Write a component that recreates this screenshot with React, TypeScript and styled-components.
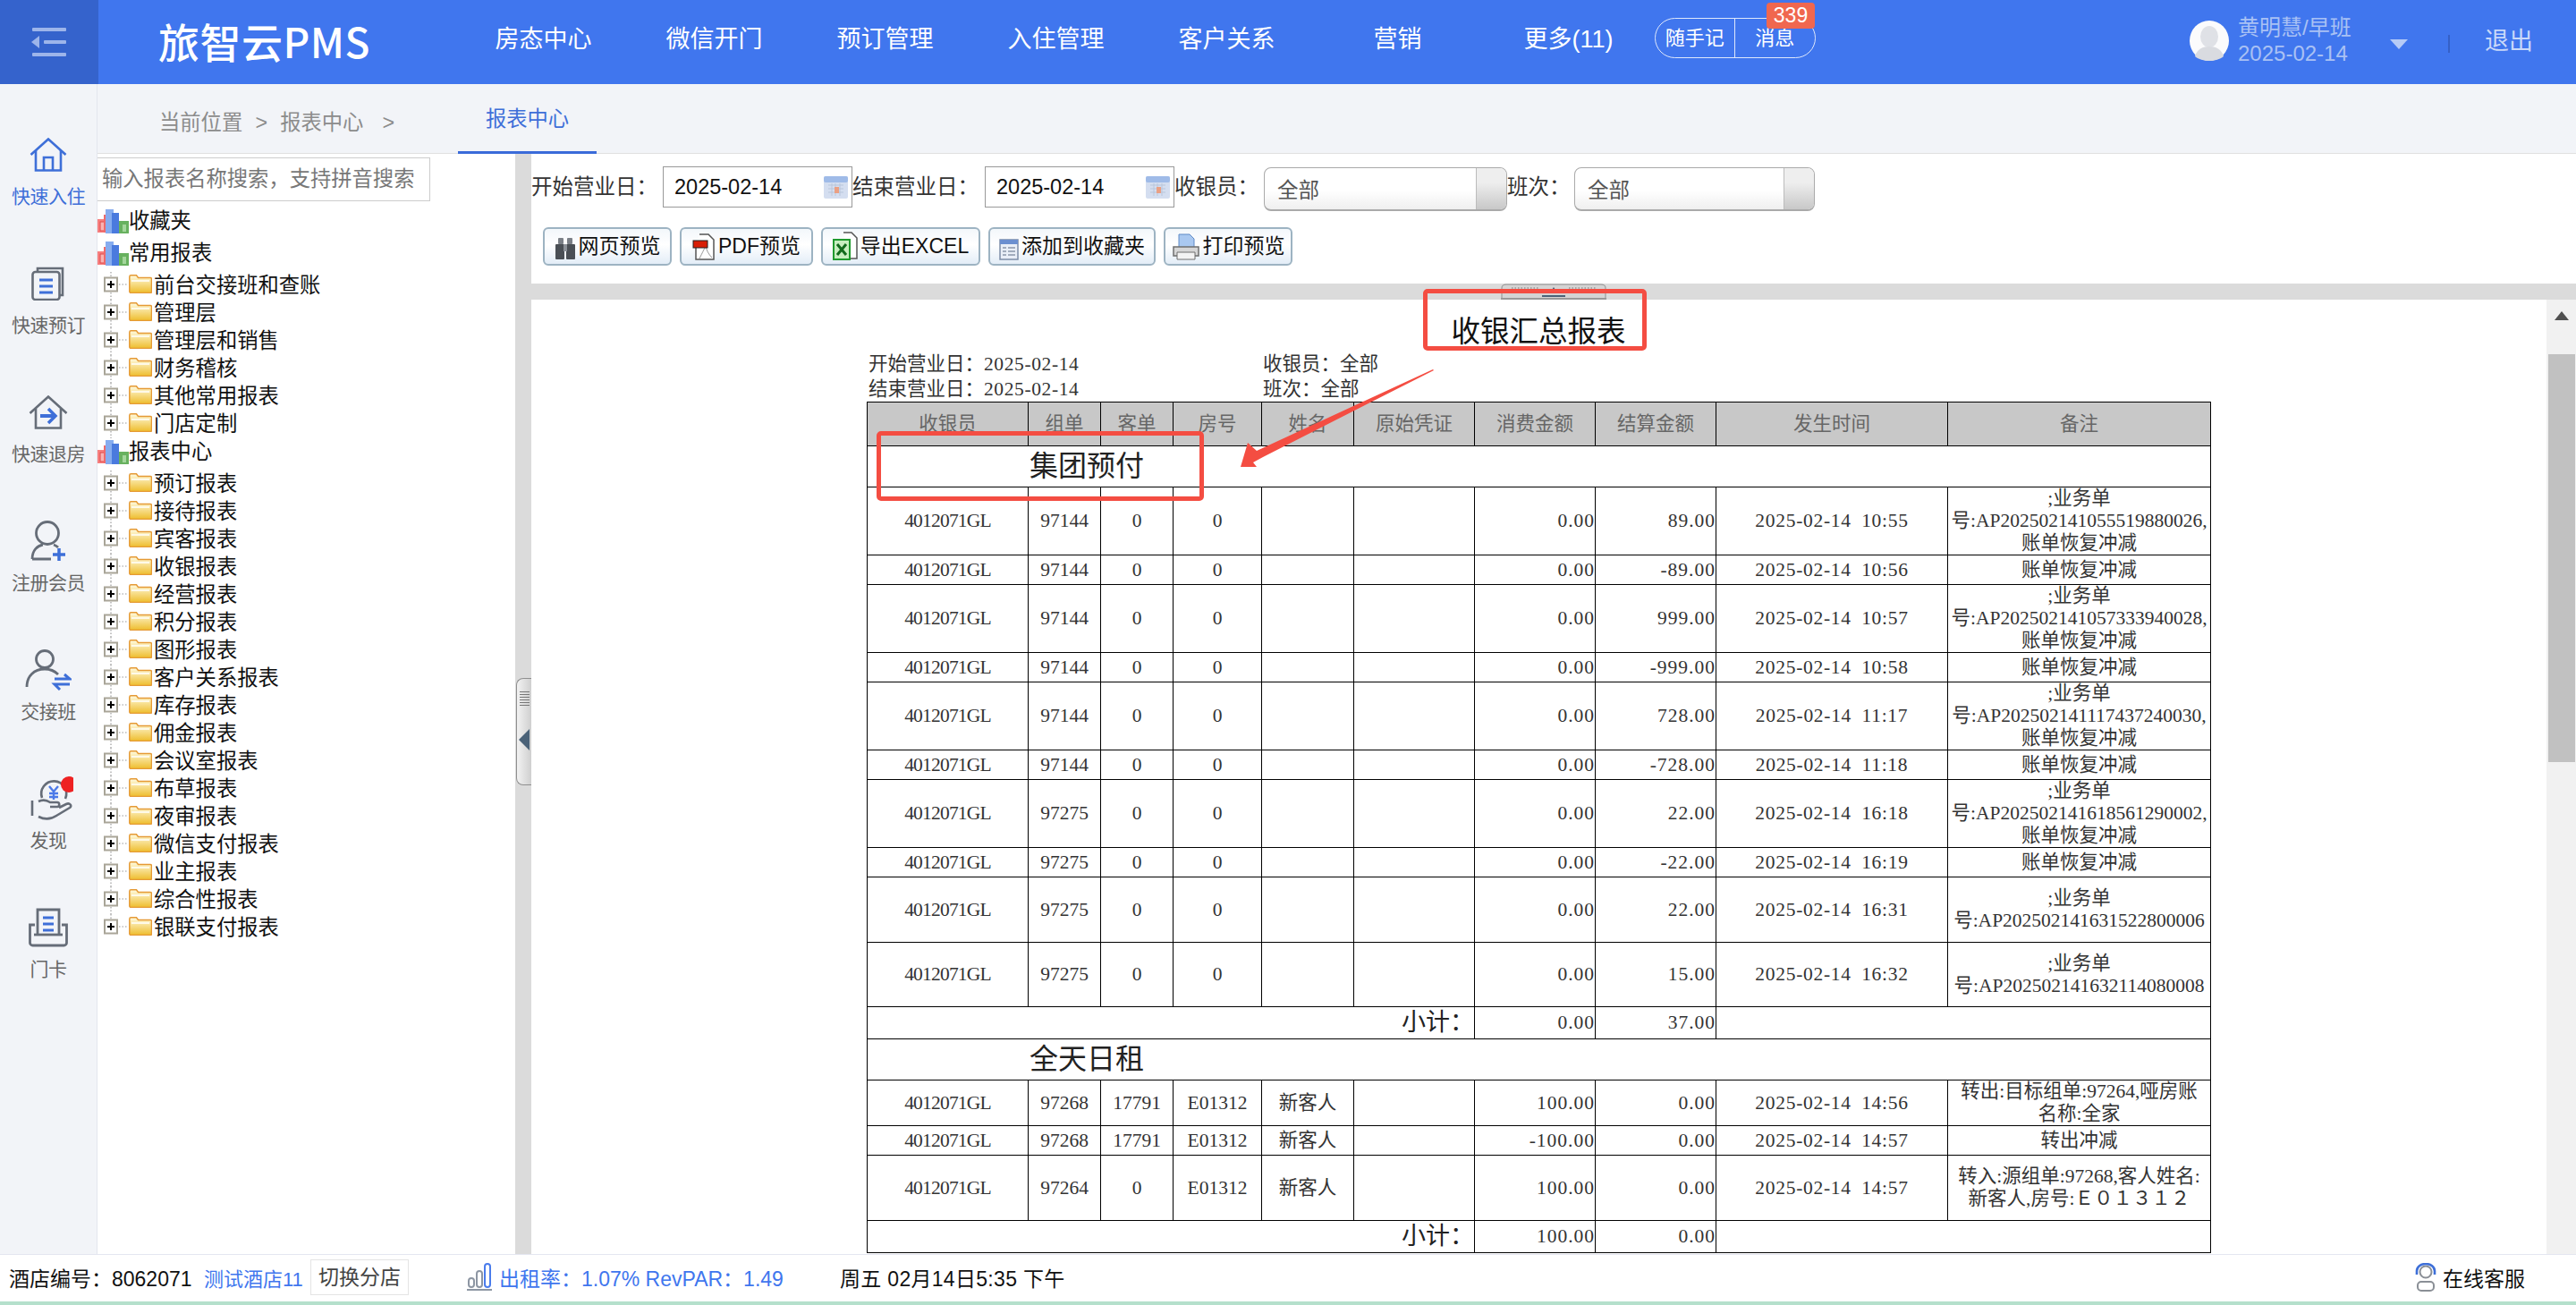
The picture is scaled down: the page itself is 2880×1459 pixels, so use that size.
import { FC } from "react";
import styled, { createGlobalStyle } from "styled-components";

type Row = {
  cols: string[];
  note: string[];
  h: number;
};

const navItems = ["房态中心", "微信开门", "预订管理", "入住管理", "客户关系", "营销", "更多(11)"];

const commonReports = ["前台交接班和查账", "管理层", "管理层和销售", "财务稽核", "其他常用报表", "门店定制"];
const reportCenter = [
  "预订报表", "接待报表", "宾客报表", "收银报表", "经营报表", "积分报表", "图形报表", "客户关系报表", "库存报表",
  "佣金报表", "会议室报表", "布草报表", "夜审报表", "微信支付报表", "业主报表", "综合性报表", "银联支付报表",
];

const headers = ["收银员", "组单", "客单", "房号", "姓名", "原始凭证", "消费金额", "结算金额", "发生时间", "备注"];
const widths = [180, 81, 81, 99, 103, 135, 135, 135, 259, 294];

const BILL = "账单恢复冲减";
const pay = (group: string, spend: string, settle: string, time: string, note: string[], h: number): Row => ({
  cols: ["4012071GL", group, "0", "0", "", "", spend, settle, `2025-02-14 ${time}`],
  note,
  h,
});
const stay = (group: string, guest: string, spend: string, time: string, note: string[], h: number): Row => ({
  cols: ["4012071GL", group, guest, "E01312", "新客人", "", spend, "0.00", `2025-02-14 ${time}`],
  note,
  h,
});

const prepaid: Row[] = [
  pay("97144", "0.00", "89.00", "10:55", [";业务单", "号:AP202502141055519880026,", BILL], 76),
  pay("97144", "0.00", "-89.00", "10:56", [BILL], 33),
  pay("97144", "0.00", "999.00", "10:57", [";业务单", "号:AP202502141057333940028,", BILL], 76),
  pay("97144", "0.00", "-999.00", "10:58", [BILL], 33),
  pay("97144", "0.00", "728.00", "11:17", [";业务单", "号:AP202502141117437240030,", BILL], 75),
  pay("97144", "0.00", "-728.00", "11:18", [BILL], 33),
  pay("97275", "0.00", "22.00", "16:18", [";业务单", "号:AP202502141618561290002,", BILL], 75),
  pay("97275", "0.00", "-22.00", "16:19", [BILL], 33),
  pay("97275", "0.00", "22.00", "16:31", [";业务单", "号:AP202502141631522800006"], 73),
  pay("97275", "0.00", "15.00", "16:32", [";业务单", "号:AP202502141632114080008"], 72),
];

const fullDay: Row[] = [
  stay("97268", "17791", "100.00", "14:56", ["转出:目标组单:97264,哑房账", "名称:全家"], 50),
  stay("97268", "17791", "-100.00", "14:57", ["转出冲减"], 33),
  stay("97264", "0", "100.00", "14:57", ["转入:源组单:97268,客人姓名:", "新客人,房号:Ｅ０１３１２"], 73),
];

const MenuIcon: FC = () => (
  <svg width="40" height="32" viewBox="0 0 40 32" fill="#9db5ea">
    <rect x="1" y="0" width="38" height="4" rx="1" />
    <rect x="14" y="14" width="25" height="4" rx="1" />
    <rect x="1" y="28" width="38" height="4" rx="1" />
    <path d="M0 16 9 9v14z" />
  </svg>
);

const Avatar: FC = () => (
  <svg width="44" height="45" viewBox="0 0 44 45">
    <ellipse cx="22" cy="22.5" rx="22" ry="22.5" fill="#fbfbfc" />
    <ellipse cx="22" cy="18" rx="10" ry="12" fill="#dfe1e6" />
    <path d="M6 40c2-8 9-11 16-11s14 3 16 11c-4 3.500-10 5-16 5S10 43.500 6 40z" fill="#d9dbe0" />
  </svg>
);

const HomeIcon: FC = () => (
  <svg width="42" height="38" viewBox="0 0 42 38" fill="none" stroke="#3e6fd8" strokeWidth="2.600">
    <path d="M1.500 19 21 1.500 40.500 19" />
    <path d="M7 14v22.500h28V14" />
    <path d="M16 36.500V22h10v14.500" />
  </svg>
);

const DocsIcon: FC = () => (
  <svg width="38" height="38" viewBox="0 0 38 38" fill="none" stroke="#666d78" strokeWidth="2.600">
    <path d="M7 5V2h28v30h-3" />
    <rect x="1.500" y="6" width="30" height="31" rx="3" />
    <path d="M9 15h15M9 22h15M9 29h15" stroke="#3e6fd8" strokeWidth="3" />
  </svg>
);

const CheckoutIcon: FC = () => (
  <svg width="44" height="38" viewBox="0 0 44 38" fill="none" stroke="#666d78" strokeWidth="2.600">
    <path d="M1.500 20 22 1.500 42.500 20" />
    <path d="M8 15v21.500h28V15" />
    <path d="M13 23h15" stroke="#3e6fd8" strokeWidth="4" />
    <path d="m22 15 8 8-8 8" stroke="#3e6fd8" strokeWidth="3.500" />
  </svg>
);

const MemberIcon: FC = () => (
  <svg width="40" height="46" viewBox="0 0 40 46" fill="none" stroke="#666d78" strokeWidth="2.800">
    <circle cx="19" cy="14" r="12.500" />
    <path d="M2 43c0-10 6-15 12-16M26 27c2 .7 4 2 5 3M2 43h21" />
    <path d="M32 31v14M25 38h14" stroke="#3e6fd8" strokeWidth="3.500" />
  </svg>
);

const ShiftIcon: FC = () => (
  <svg width="52" height="46" viewBox="0 0 52 46" fill="none" stroke="#666d78" strokeWidth="2.800">
    <circle cx="22" cy="11" r="9.500" />
    <path d="M2 42c0-12 8-20 20-20 6 0 11 2 15 6" />
    <path d="M33 33h17l-6-5M50 39H33l6 6" stroke="#3e6fd8" strokeWidth="3" />
  </svg>
);

const DiscoverIcon: FC = () => (
  <svg width="56" height="50" viewBox="0 0 56 50" fill="none" stroke="#666d78" strokeWidth="2.600">
    <g transform="translate(8 0)">
      <path d="M13 24a14 14 0 1 1 26 1" />
      <path d="M2 27v17M9 28c6-3 10-1 13 1h8c3 0 3 5 0 5h-8M9 45c8 4 14 3 20-1l15-9c3-2 0-6-4-4l-8 4" />
      <path d="m21 11 5 6 5-6M26 17v9M21 19h10M21 23h10" stroke="#4b79e8" strokeWidth="2.400" />
    </g>
    <circle cx="51" cy="9" r="9" fill="#ee2223" stroke="none" />
  </svg>
);

const CardIcon: FC = () => (
  <svg width="44" height="44" viewBox="0 0 44 44" fill="none" stroke="#666d78" strokeWidth="2.800">
    <path d="M10 30V2h24v28" />
    <path d="M7 19H1.500v20a3 3 0 0 0 3 3h35a3 3 0 0 0 3-3V19H37" />
    <path d="M6 30h32" />
    <path d="M16 11h12M16 18h12M16 25h12" stroke="#3e6fd8" strokeWidth="3" />
  </svg>
);

const BarsIcon: FC = () => (
  <svg width="35" height="29" viewBox="0 0 35 29">
    <rect x="0" y="12" width="10" height="15" fill="#f77f7f" />
    <rect x="3" y="15" width="5" height="10" fill="#f9b3b3" stroke="#e04848" />
    <rect x="7" y="7" width="7" height="20" fill="#ee6a6a" />
    <rect x="9" y="1" width="9" height="27" fill="#86acef" />
    <rect x="16" y="5" width="8" height="23" fill="#4a7ade" />
    <rect x="24" y="14" width="11" height="14" fill="#68b15f" />
    <rect x="28" y="18" width="4" height="8" fill="#a4d69c" />
  </svg>
);

const Connector: FC<{ last?: boolean }> = ({ last }) => (
  <svg width="28" height="31" viewBox="0 0 28 31">
    <path d={last ? "M8 0v5" : "M8 0v5M8 23v8"} stroke="#888" strokeDasharray="1.500 2" fill="none" />
    <path d="M17 14h10" stroke="#999" strokeDasharray="1.500 2" fill="none" />
    <rect x="1" y="6.500" width="14" height="15" fill="#fff" stroke="#a9a598" strokeWidth="2" />
    <path d="M4 14h8M8 10v8" stroke="#000" strokeWidth="2" />
  </svg>
);

const FolderIcon: FC = () => (
  <svg width="26" height="21" viewBox="0 0 26 21">
    <defs>
      <linearGradient id="folderFill" x1="0" y1="0" x2="0" y2="1">
        <stop offset="0" stopColor="#fffbe0" />
        <stop offset="1" stopColor="#eebd2c" />
      </linearGradient>
    </defs>
    <path d="M.800 2.500C.800 1.500 1.500 .800 2.500 .800h6l2 2.700h13.500c1 0 1.500 .7 1.500 1.500V19c0 .8-.5 1.500-1.500 1.500H2.500c-1 0-1.700-.7-1.700-1.500z" fill="url(#folderFill)" stroke="#e59a35" strokeWidth="1.500" />
    <path d="M3 7h20" stroke="#fff" strokeWidth="1.500" />
  </svg>
);

const CalendarIcon: FC = () => (
  <svg width="27" height="25" viewBox="0 0 27 25">
    <rect width="27" height="25" rx="2" fill="#d4def0" />
    <rect width="27" height="7" rx="2" fill="#9fbbe8" />
    <path d="M5 10h17M5 14h17M5 18h17M9 8v14M13 8v14M18 8v14" stroke="#b9c6db" />
    <rect x="12" y="12" width="5" height="7" fill="#eaa084" />
  </svg>
);

const BinocularIcon: FC = () => (
  <svg width="24" height="26" viewBox="0 0 24 26" fill="#4a4f55">
    <rect x="4" y="1" width="6" height="7" rx="1" fill="#7b8087" />
    <rect x="14" y="1" width="6" height="7" rx="1" fill="#7b8087" />
    <rect x="1" y="8" width="10" height="17" rx="1" />
    <rect x="13" y="8" width="10" height="17" rx="1" />
    <rect x="10" y="8" width="4" height="8" fill="#8b9097" />
  </svg>
);

const PdfIcon: FC = () => (
  <svg width="26" height="30" viewBox="0 0 26 30" fill="none">
    <path d="M8 1h10l6 6v22H4V12" fill="#fff" stroke="#555" strokeWidth="1.500" />
    <path d="M8 28c3-6 5-10 7-14 1 5 3 9 7 13" stroke="#999" />
    <rect x="1" y="8" width="16" height="8" fill="#d81e06" stroke="#222" />
  </svg>
);

const ExcelIcon: FC = () => (
  <svg width="28" height="32" viewBox="0 0 28 32" fill="none">
    <path d="M12 1h9l6 6v23H17" fill="#fff" stroke="#555" strokeWidth="1.500" />
    <rect x="1" y="9" width="18" height="22" fill="#c7eec0" stroke="#1f9a2e" strokeWidth="2" />
    <path d="m5 14 10 12M15 14 5 26" stroke="#126b1d" strokeWidth="3" />
  </svg>
);

const ListIcon: FC = () => (
  <svg width="22" height="24" viewBox="0 0 22 24">
    <rect x="1" y="1" width="20" height="22" fill="#e9eef7" stroke="#7d8da8" strokeWidth="1.500" />
    <rect x="1" y="1" width="20" height="5" fill="#6b8fd0" />
    <path d="M4 10h4M10 10h8M4 14h4M10 14h8M4 18h4M10 18h8" stroke="#8a97ab" strokeWidth="1.500" />
  </svg>
);

const PrintIcon: FC = () => (
  <svg width="32" height="30" viewBox="0 0 32 30">
    <path d="M8 1h12l5 5v11H8z" fill="#a9c8f0" stroke="#5f8ac6" />
    <path d="M2 15h28v10H2z" fill="#d6d6d6" stroke="#6f6f6f" strokeWidth="1.500" />
    <path d="M6 21h20v8H6z" fill="#f3f3f3" stroke="#6f6f6f" />
  </svg>
);

const SplitArrow: FC = () => (
  <svg width="12" height="24" viewBox="0 0 12 24">
    <path d="M12 0v24L0 12z" fill="#4a6278" />
  </svg>
);

const GripTop: FC = () => (
  <svg width="118" height="18" viewBox="0 0 118 18" fill="none">
    <path d="M1 18V5q0-4 5-4h106q5 0 5 4v13z" fill="#d4d4d4" stroke="#8f8f8f" />
    <path d="M12 5h30M12 8h30M76 5h30M76 8h30" stroke="#777" strokeDasharray="1.500 2" />
    <path d="m59 4 4 6h-8z" fill="#4a6278" />
    <path d="M46 14h26" stroke="#4a6278" strokeWidth="2" />
    <path d="M0 17h118" stroke="#999" strokeWidth="2" />
  </svg>
);

const GuideArrow: FC = () => (
  <svg width="216" height="112" viewBox="0 0 216 112">
    <path d="M216 1 215 0 18 91 8 82 0 109 18 109 14 104 25 98z" fill="#f44d42" />
  </svg>
);

const StatsIcon: FC = () => (
  <svg width="28" height="31" viewBox="0 0 28 31" fill="none" stroke="#8d96a3" strokeWidth="2">
    <rect x="2" y="17" width="6" height="10" rx="3" />
    <rect x="11" y="9" width="6" height="18" rx="3" />
    <rect x="20" y="1" width="6" height="26" rx="3" stroke="#4a7cec" />
    <path d="M0 30h28" />
  </svg>
);

const ServiceIcon: FC = () => (
  <svg width="26" height="32" viewBox="0 0 26 32" fill="none" stroke="#8a8f96" strokeWidth="2">
    <circle cx="13" cy="10" r="6.500" />
    <path d="M3 13V9a10 8 0 0 1 20 0v4" stroke="#3e6fd8" strokeWidth="2.600" />
    <rect x="4" y="21" width="18" height="10" rx="4" />
  </svg>
);

const spacingFor = (i: number): string => {
  if (i === 0) return "-0.800px";
  if (i === 6 || i === 7) return "1px";
  if (i === 8) return "0.700px";
  return "0";
};

const ReportRow: FC<{ row: Row }> = ({ row }) => (
  <StTr $h={row.h}>
    {row.cols.map((c, i) => (
      <StTd key={i} $align={i === 6 || i === 7 ? "right" : "center"} $spaced={i === 8} $track={spacingFor(i)}>
        {c}
      </StTd>
    ))}
    <StTd $align="center">
      {row.note.map((n) => (
        <StNoteLine key={n}>{n}</StNoteLine>
      ))}
    </StTd>
  </StTr>
);

const Subtotal: FC<{ spend: string; settle: string }> = ({ spend, settle }) => (
  <StTr $h={36}>
    <StSubLabel colSpan={6}>小计：</StSubLabel>
    <StTd $align="right" $track="1px">
      {spend}
    </StTd>
    <StTd $align="right" $track="1px">
      {settle}
    </StTd>
    <StTd colSpan={2} $align="center" />
  </StTr>
);

const App: FC = () => {
  return (
    <StRoot>
      <GlobalStyle />
      <StHeader>
        <StMenuBox>
          <MenuIcon />
        </StMenuBox>
        <StLogo>旅智云PMS</StLogo>
        <StNav>
          {navItems.map((n) => (
            <StNavItem key={n}>{n}</StNavItem>
          ))}
        </StNav>
        <StPill>
          <StPillPart $w={89}>随手记</StPillPart>
          <StPillPart $w={91} $line>
            消息
          </StPillPart>
          <StBadge>339</StBadge>
        </StPill>
        <StUser>
          <Avatar />
          <StUserText>
            <span>黄明慧/早班</span>
            <span>2025-02-14</span>
          </StUserText>
          <StCaret />
          <StUserDivider />
          <StLogout>退出</StLogout>
        </StUser>
      </StHeader>

      <StBody>
        <StSide>
          <StSideItem $active>
            <StSideIcon>
              <HomeIcon />
            </StSideIcon>
            快速入住
          </StSideItem>
          <StSideItem>
            <StSideIcon>
              <DocsIcon />
            </StSideIcon>
            快速预订
          </StSideItem>
          <StSideItem>
            <StSideIcon>
              <CheckoutIcon />
            </StSideIcon>
            快速退房
          </StSideItem>
          <StSideItem>
            <StSideIcon>
              <MemberIcon />
            </StSideIcon>
            注册会员
          </StSideItem>
          <StSideItem>
            <StSideIcon>
              <ShiftIcon />
            </StSideIcon>
            交接班
          </StSideItem>
          <StSideItem>
            <StSideIcon>
              <DiscoverIcon />
            </StSideIcon>
            发现
          </StSideItem>
          <StSideItem>
            <StSideIcon>
              <CardIcon />
            </StSideIcon>
            门卡
          </StSideItem>
        </StSide>

        <StContent>
          <StCrumbBar>
            <StCrumbs>
              当前位置<StCrumbSep $w={42}>&gt;</StCrumbSep>报表中心<StCrumbSep $w={56}>&gt;</StCrumbSep>
            </StCrumbs>
            <StTab>报表中心</StTab>
          </StCrumbBar>

          <StPanels>
            <StTree>
              <StSearch>输入报表名称搜索，支持拼音搜索</StSearch>
              <StRootNode>
                <BarsIcon />
                收藏夹
              </StRootNode>
              <StRootNode>
                <BarsIcon />
                常用报表
              </StRootNode>
              {commonReports.map((t) => (
                <StTreeRow key={t}>
                  <Connector />
                  <StFolder>
                    <FolderIcon />
                  </StFolder>
                  {t}
                </StTreeRow>
              ))}
              <StRootNode>
                <BarsIcon />
                报表中心
              </StRootNode>
              {reportCenter.map((t, i) => (
                <StTreeRow key={t}>
                  <Connector last={i === reportCenter.length - 1} />
                  <StFolder>
                    <FolderIcon />
                  </StFolder>
                  {t}
                </StTreeRow>
              ))}
            </StTree>

            <StSplitter>
              <StSplitHandle>
                <StGrip />
                <SplitArrow />
              </StSplitHandle>
            </StSplitter>

            <StMain>
              <StToolbar>
                <StFilterRow>
                  <StLabel $w={147}>开始营业日：</StLabel>
                  <StDateBox>
                    2025-02-14
                    <CalendarIcon />
                  </StDateBox>
                  <StLabel $w={148}>结束营业日：</StLabel>
                  <StDateBox>
                    2025-02-14
                    <CalendarIcon />
                  </StDateBox>
                  <StLabel $w={100}>收银员：</StLabel>
                  <StSelect $w={272}>
                    全部
                    <StSelectArrow />
                  </StSelect>
                  <StLabel $w={75}>班次：</StLabel>
                  <StSelect $w={269}>
                    全部
                    <StSelectArrow />
                  </StSelect>
                </StFilterRow>
                <StButtonRow>
                  <StButton $w={144}>
                    <BinocularIcon />
                    网页预览
                  </StButton>
                  <StButton $w={149}>
                    <PdfIcon />
                    PDF预览
                  </StButton>
                  <StButton $w={178}>
                    <ExcelIcon />
                    导出EXCEL
                  </StButton>
                  <StButton $w={187}>
                    <ListIcon />
                    添加到收藏夹
                  </StButton>
                  <StButton $w={144}>
                    <PrintIcon />
                    打印预览
                  </StButton>
                </StButtonRow>
              </StToolbar>

              <StGreyBar>
                <GripTop />
              </StGreyBar>

              <StReport>
                <StSheet>
                  <StReportTitle>收银汇总报表</StReportTitle>
                  <StMeta>
                    <span>
                      开始营业日：<StMetaDate>2025-02-14</StMetaDate>
                    </span>
                    <span>收银员：全部</span>
                    <span>
                      结束营业日：<StMetaDate>2025-02-14</StMetaDate>
                    </span>
                    <span>班次：全部</span>
                  </StMeta>
                  <StTable>
                    <colgroup>
                      {widths.map((w, i) => (
                        <StCol key={i} $w={w} />
                      ))}
                    </colgroup>
                    <tbody>
                      <StHeadRow>
                        {headers.map((h) => (
                          <StTh key={h}>{h}</StTh>
                        ))}
                      </StHeadRow>
                      <StTr $h={46}>
                        <StGroupCell colSpan={10}>集团预付</StGroupCell>
                      </StTr>
                      {prepaid.map((r, i) => (
                        <ReportRow key={i} row={r} />
                      ))}
                      <Subtotal spend="0.00" settle="37.00" />
                      <StTr $h={46}>
                        <StGroupCell colSpan={10}>全天日租</StGroupCell>
                      </StTr>
                      {fullDay.map((r, i) => (
                        <ReportRow key={i} row={r} />
                      ))}
                      <Subtotal spend="100.00" settle="0.00" />
                    </tbody>
                  </StTable>
                </StSheet>
                <StScrollbar>
                  <StScrollUp />
                  <StScrollThumb />
                </StScrollbar>
              </StReport>

              <StNoteBoxTitle />
              <StNoteBoxGroup />
              <StGuide>
                <GuideArrow />
              </StGuide>
            </StMain>
          </StPanels>
        </StContent>
      </StBody>

      <StFooter>
        <StHotelCode>酒店编号：8062071</StHotelCode>
        <StHotelName>测试酒店11</StHotelName>
        <StSwitch>切换分店</StSwitch>
        <StStats>
          <StatsIcon />
          出租率：1.07% RevPAR：1.49
        </StStats>
        <StClock>周五 02月14日5:35 下午</StClock>
        <StService>
          <ServiceIcon />
          在线客服
        </StService>
      </StFooter>
    </StRoot>
  );
};

export default App;

const SANS = `"Liberation Sans", "Noto Sans CJK SC", sans-serif`;
const SERIF = `"Liberation Serif", "Noto Sans CJK SC", serif`;

const GlobalStyle = createGlobalStyle`
  html, body {
    margin: 0;
    padding: 0;
    background: #fff;
  }
  body {
    font-family: ${SANS};
  }
`;

const StRoot = styled.div`
  width: 2880px;
  height: 1459px;
  display: flex;
  flex-direction: column;
  overflow: hidden;
  background: #fff;
  color: #222;
`;

const StHeader = styled.header`
  height: 94px;
  flex: none;
  display: flex;
  background: #4076ee;
  color: #fff;
`;

const StMenuBox = styled.div`
  width: 110px;
  display: flex;
  align-items: center;
  justify-content: center;
  background: #3563cc;
`;

const StLogo = styled.div`
  width: 402px;
  padding-left: 67px;
  box-sizing: border-box;
  font-family: "Noto Sans CJK SC", sans-serif;
  font-size: 46px;
  line-height: 90px;
  font-weight: 500;
  letter-spacing: 0.500px;
  white-space: nowrap;
`;

const StNav = styled.nav`
  display: flex;
`;

const StNavItem = styled.div`
  width: 191px;
  text-align: center;
  font-size: 27px;
  line-height: 88px;
  white-space: nowrap;
`;

const StPill = styled.div`
  position: relative;
  width: 180px;
  height: 45px;
  margin: 20px 0 0 1px;
  display: flex;
  box-sizing: border-box;
  border: 1px solid #dfe8fb;
  border-radius: 23px;
`;

const StPillPart = styled.div<{ $w: number; $line?: boolean }>`
  width: ${(p) => p.$w}px;
  text-align: center;
  font-size: 22px;
  line-height: 43px;
  white-space: nowrap;
  border-left: ${(p) => (p.$line ? "1px solid #dfe8fb" : "none")};
`;

const StBadge = styled.div`
  position: absolute;
  right: 0;
  top: -18px;
  width: 54px;
  height: 29px;
  background: #f0674f;
  border-radius: 4px;
  text-align: center;
  font-size: 23px;
  line-height: 29px;
`;

const StUser = styled.div`
  margin-left: 418px;
  display: flex;
  align-items: center;
  height: 90px;
`;

const StUserText = styled.div`
  width: 170px;
  margin-left: 10px;
  display: flex;
  flex-direction: column;
  color: #a9c1f4;
  font-size: 24px;
  line-height: 29px;
`;

const StCaret = styled.div`
  width: 0;
  height: 0;
  border-left: 10px solid transparent;
  border-right: 10px solid transparent;
  border-top: 11px solid #b6cbf6;
  margin-top: 8px;
`;

const StUserDivider = styled.div`
  width: 2px;
  height: 20px;
  margin: 8px 39px 0 45px;
  background: #3560c6;
`;

const StLogout = styled.div`
  font-size: 27px;
  color: #c9d8f9;
  margin-top: -4px;
`;

const StBody = styled.div`
  flex: 1;
  min-height: 0;
  display: flex;
`;

const StSide = styled.aside`
  width: 108px;
  flex: none;
  padding-top: 55px;
  box-sizing: content-box;
  background: #f2f4f8;
  border-right: 1px solid #e3e6ee;
`;

const StSideItem = styled.div<{ $active?: boolean }>`
  height: 144px;
  display: flex;
  flex-direction: column;
  align-items: center;
  font-size: 21px;
  line-height: 28px;
  letter-spacing: -0.500px;
  color: ${(p) => (p.$active ? "#3e6fd8" : "#666")};
`;

const StSideIcon = styled.div`
  height: 48px;
  margin-bottom: 9px;
  display: flex;
  align-items: center;
  justify-content: center;
`;

const StContent = styled.div`
  flex: 1;
  min-width: 0;
  display: flex;
  flex-direction: column;
`;

const StCrumbBar = styled.div`
  height: 78px;
  flex: none;
  box-sizing: border-box;
  display: flex;
  background: #f2f4f8;
  border-bottom: 1px solid #e0e0e0;
`;

const StCrumbs = styled.div`
  width: 403px;
  padding-left: 69px;
  box-sizing: border-box;
  font-size: 23.300px;
  line-height: 86px;
  color: #8c8c8c;
  white-space: nowrap;
`;

const StCrumbSep = styled.span<{ $w: number }>`
  display: inline-block;
  width: ${(p) => p.$w}px;
  text-align: center;
  color: #8c8c8c;
`;

const StTab = styled.div`
  width: 155px;
  height: 78px;
  box-sizing: border-box;
  border-bottom: 3px solid #3a6bd9;
  text-align: center;
  font-size: 23.300px;
  line-height: 78px;
  color: #3e6fd8;
`;

const StPanels = styled.div`
  flex: 1;
  min-height: 0;
  display: flex;
`;

const StTree = styled.div`
  width: 467px;
  flex: none;
  font-size: 23.300px;
  color: #111;
  background: #fff;
`;

const StSearch = styled.div`
  width: 372px;
  height: 49px;
  margin: 4px 0 7px;
  padding-left: 5px;
  box-sizing: border-box;
  border: 1px solid #ccc;
  border-left: none;
  color: #777;
  line-height: 47px;
  white-space: nowrap;
`;

const StRootNode = styled.div`
  height: 31px;
  padding-bottom: 5px;
  display: flex;
  align-items: center;
  white-space: nowrap;
  line-height: 31px;

  svg {
    flex: none;
  }
`;

const StTreeRow = styled.div`
  height: 31px;
  padding-left: 7px;
  display: flex;
  align-items: center;
  white-space: nowrap;
  line-height: 31px;
`;

const StFolder = styled.div`
  width: 28px;
  height: 21px;
  margin-top: -9px;
`;

const StSplitter = styled.div`
  width: 18px;
  flex: none;
  padding-top: 586px;
  box-sizing: border-box;
  background: #dbdbdb;
`;

const StSplitHandle = styled.div`
  width: 17px;
  height: 120px;
  margin-left: 1px;
  box-sizing: border-box;
  display: flex;
  flex-direction: column;
  align-items: center;
  gap: 24px;
  padding-top: 14px;
  background: linear-gradient(90deg, #f2f2f2, #cfcfcf);
  border: 1px solid #8f8f8f;
  border-right: none;
  border-radius: 8px 0 0 8px;
`;

const StGrip = styled.div`
  width: 11px;
  height: 18px;
  background: repeating-linear-gradient(180deg, #777 0 1px, transparent 1px 3px);
`;

const StMain = styled.div`
  position: relative;
  flex: 1;
  min-width: 0;
  display: flex;
  flex-direction: column;
`;

const StToolbar = styled.div`
  height: 145px;
  flex: none;
  box-sizing: border-box;
  padding-top: 14px;
  font-size: 23.500px;
`;

const StFilterRow = styled.div`
  display: flex;
  align-items: flex-start;
  height: 68px;
`;

const StLabel = styled.div<{ $w: number }>`
  width: ${(p) => p.$w}px;
  flex: none;
  line-height: 46px;
  color: #333;
  white-space: nowrap;
`;

const StDateBox = styled.div`
  width: 212px;
  height: 46px;
  flex: none;
  box-sizing: border-box;
  padding: 0 4px 0 12px;
  display: flex;
  align-items: center;
  justify-content: space-between;
  border: 1px solid #999;
  color: #111;
  background: #fff;
`;

const StSelect = styled.div<{ $w: number }>`
  width: ${(p) => p.$w}px;
  height: 49px;
  flex: none;
  box-sizing: border-box;
  margin-top: 1px;
  padding-left: 14px;
  display: flex;
  justify-content: space-between;
  overflow: hidden;
  border: 1px solid #aaa;
  border-bottom-width: 2px;
  border-radius: 8px;
  line-height: 50px;
  color: #555;
  background: linear-gradient(180deg, #fff 55%, #efefef);
`;

const StSelectArrow = styled.div`
  width: 33px;
  flex: none;
  border-left: 1px solid #bcbcbc;
  background: linear-gradient(180deg, #eee 35%, #c8c8c8);
`;

const StButtonRow = styled.div`
  display: flex;
  gap: 9px;
  padding-left: 13px;
`;

const StButton = styled.div<{ $w: number }>`
  width: ${(p) => p.$w}px;
  height: 43px;
  flex: none;
  box-sizing: border-box;
  display: flex;
  align-items: flex-end;
  justify-content: center;
  gap: 3px;
  padding-bottom: 4px;
  overflow: hidden;
  border: 2px solid #9db3c2;
  border-radius: 6px;
  background: linear-gradient(180deg, #f3f7fb, #fff 45%, #e3edf7);
  color: #111;
  font-size: 23px;
  line-height: 32px;
  white-space: nowrap;

  svg {
    flex: none;
  }
`;

const StGreyBar = styled.div`
  height: 18px;
  flex: none;
  display: flex;
  justify-content: center;
  background: #dbdbdb;
`;

const StReport = styled.div`
  flex: 1;
  min-height: 0;
  display: flex;
`;

const StSheet = styled.div`
  flex: 1;
  min-width: 0;
  overflow: hidden;
  padding-left: 375px;
  box-sizing: border-box;
  font-family: ${SERIF};
  font-size: 21.500px;
  color: #333;
`;

const StReportTitle = styled.div`
  width: 1502px;
  padding-top: 16px;
  text-align: center;
  font-size: 32.500px;
  line-height: 40px;
  color: #111;
  margin-bottom: 3px;
`;

const StMeta = styled.div`
  display: grid;
  grid-template-columns: 441px 1fr;
  width: 1502px;
  padding-left: 2px;
  box-sizing: border-box;
  line-height: 27.500px;
`;

const StMetaDate = styled.span`
  letter-spacing: 0.600px;
`;

const StTable = styled.table`
  width: 1502px;
  table-layout: fixed;
  border-collapse: collapse;
  border: 1px solid #000;
  line-height: 25px;
`;

const StCol = styled.col<{ $w: number }>`
  width: ${(p) => p.$w}px;
`;

const StHeadRow = styled.tr`
  height: 49px;
  background: #c8c8c8;
`;

const StTh = styled.th`
  padding: 0;
  border: 1px solid #000;
  font-weight: normal;
  color: #666;
`;

const StTr = styled.tr<{ $h: number }>`
  height: ${(p) => p.$h}px;
`;

const StTd = styled.td<{ $align: string; $spaced?: boolean; $track?: string }>`
  padding: 0;
  border: 1px solid #000;
  text-align: ${(p) => p.$align};
  white-space: nowrap;
  letter-spacing: ${(p) => p.$track ?? "0"};
  word-spacing: ${(p) => (p.$spaced ? "5.400px" : "normal")};
`;

const StNoteLine = styled.div`
  white-space: nowrap;
`;

const StSubLabel = styled.td`
  padding: 0;
  border: 1px solid #000;
  text-align: right;
  font-size: 27px;
  color: #222;
`;

const StGroupCell = styled.td`
  padding: 0 0 0 181px;
  border: 1px solid #000;
  font-size: 32px;
  color: #222;
`;

const StScrollbar = styled.div`
  width: 33px;
  flex: none;
  background: #f1f1f1;
`;

const StScrollUp = styled.div`
  width: 0;
  height: 0;
  margin: 13px auto 0;
  border-left: 8px solid transparent;
  border-right: 8px solid transparent;
  border-bottom: 10px solid #505050;
`;

const StScrollThumb = styled.div`
  width: 30px;
  height: 456px;
  margin: 38px auto 0;
  background: #c1c1c1;
`;

const StNoteBoxTitle = styled.div`
  position: absolute;
  left: 997px;
  top: 151px;
  width: 250px;
  height: 69px;
  box-sizing: border-box;
  border: 5px solid #f44d42;
  border-radius: 5px;
`;

const StNoteBoxGroup = styled.div`
  position: absolute;
  left: 386px;
  top: 310px;
  width: 366px;
  height: 78px;
  box-sizing: border-box;
  border: 5px solid #f44d42;
  border-radius: 5px;
`;

const StGuide = styled.div`
  position: absolute;
  left: 793px;
  top: 241px;
  width: 216px;
  height: 112px;
`;

const StFooter = styled.footer`
  position: relative;
  height: 57px;
  flex: none;
  box-sizing: border-box;
  display: flex;
  align-items: center;
  padding: 0 0 3px 10px;
  background: #fff;
  border-top: 1px solid #e4e6f0;
  border-bottom: 4px solid #b5e0cc;
  font-size: 23px;
  white-space: nowrap;
`;

const StHotelCode = styled.div`
  width: 218px;
  color: #111;
`;

const StHotelName = styled.div`
  width: 119px;
  font-size: 22px;
  color: #4076ee;
`;

const StSwitch = styled.div`
  width: 110px;
  height: 40px;
  box-sizing: border-box;
  text-align: center;
  line-height: 38px;
  border: 1px solid #e4e4e4;
  color: #444;
`;

const StStats = styled.div`
  width: 417px;
  margin-left: 65px;
  display: flex;
  align-items: center;
  gap: 8px;
  color: #4076ee;
`;

const StClock = styled.div`
  width: 1760px;
  color: #111;
  letter-spacing: 0.300px;
`;

const StService = styled.div`
  display: flex;
  align-items: center;
  gap: 6px;
  color: #111;
`;
